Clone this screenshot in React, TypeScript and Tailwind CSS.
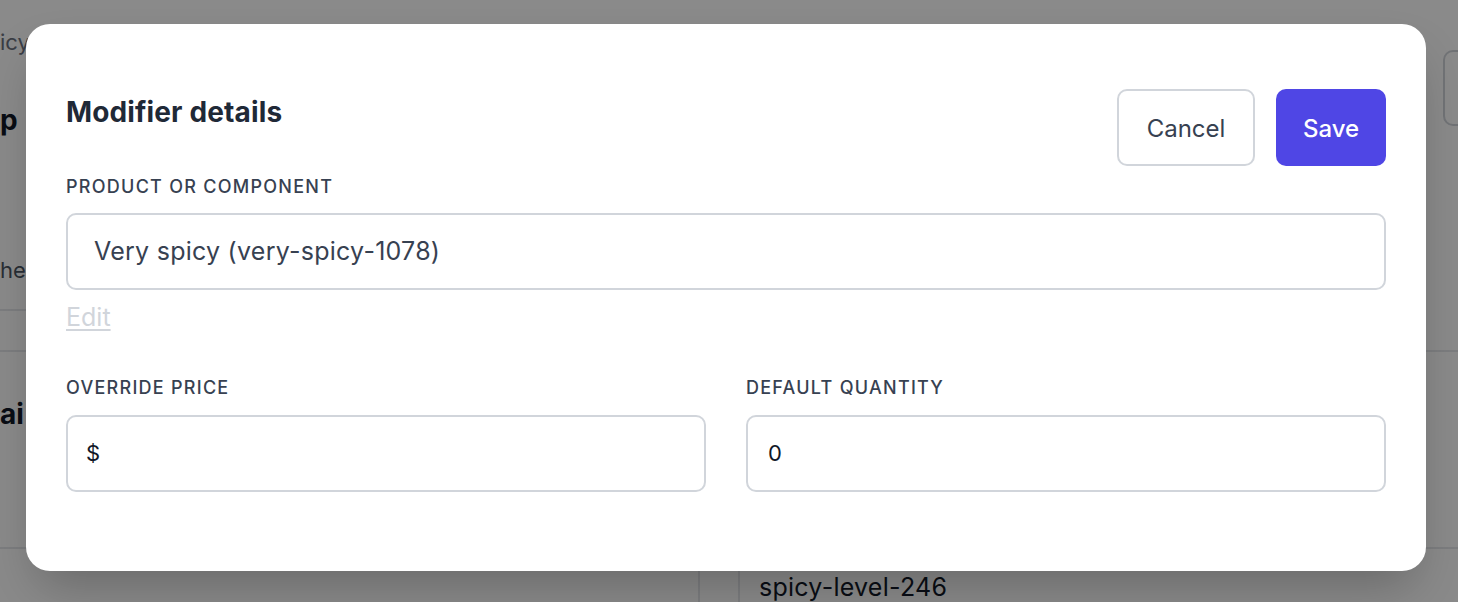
import React from "react";

const Field = ({ label, children }: { label: string; children: React.ReactNode }) => (
  <div className="flex flex-col">
    <label className="text-[18px] leading-[24px] font-medium tracking-[0.07em] text-[#374151] uppercase">
      {label}
    </label>
    {children}
  </div>
);

const BackgroundPage = () => (
  <div className="flex h-full flex-col text-[#111827]">
    {/* header area behind the modal */}
    <div className="flex h-[353px] border-b-2 border-[#e5e7eb]">
      <div className="flex w-[700px] flex-col">
        <div className="flex h-[311px] flex-col border-b-2 border-[#e5e7eb]">
          <p className="mt-[30px] text-[22px] leading-[24px] text-[#6b7280]">icy</p>
          <p className="mt-[48px] text-[28px] leading-[36px] font-bold">p</p>
          <p className="mt-[117px] text-[22px] leading-[30px] text-[#4b5563]">he</p>
        </div>
      </div>
      <div className="ml-auto flex w-[15px] flex-col pt-[50px]">
        <div className="h-[76px] w-[40px] rounded-[10px] border-2 border-[#d1d5db]" />
      </div>
    </div>
    {/* details section */}
    <div className="flex h-[197px] border-b-2 border-[#e5e7eb]">
      <p className="mt-[44px] text-[28px] leading-[36px] font-bold">ai</p>
    </div>
    {/* table row */}
    <div className="flex flex-1">
      <div className="w-[700px] border-r-2 border-[#e5e7eb]" />
      <div className="w-[40px] border-r-2 border-[#e5e7eb]" />
      <p className="pt-[23px] pl-[19px] text-[25px] leading-[30px] tracking-[0.01em] text-[#111827]">spicy-level-246</p>
    </div>
  </div>
);

export default function App() {
  return (
    <div className="relative h-[602px] w-[1458px] overflow-hidden bg-white font-['Inter',sans-serif]">
      <BackgroundPage />

      {/* overlay */}
      <div className="absolute inset-0 bg-black/[0.46]" />

      {/* modal */}
      <div className="absolute top-[24px] left-[26px] w-[1400px] rounded-[24px] bg-white px-[40px] pt-[65px] pb-[79px] shadow-2xl">
        <div className="flex items-start justify-between">
          <h2 className="mt-[7px] text-[28px] leading-[32px] font-bold tracking-[0.005em] text-[#1f2937]">
            Modifier details
          </h2>
          <div className="flex gap-[21px]">
            <button className="h-[77px] w-[138px] rounded-[10px] border-2 border-[#d1d5db] bg-white pt-[3px] text-[24px] text-[#374151]">
              Cancel
            </button>
            <button className="h-[77px] w-[110px] rounded-[10px] bg-[#4f46e5] pt-[3px] text-[24px] font-medium text-white">
              Save
            </button>
          </div>
        </div>

        <div className="mt-[9px]">
          <Field label="Product or component">
            <div className="mt-[14px] flex h-[77px] items-center rounded-[10px] border-2 border-[#d1d5db] px-[26px] text-[25px] tracking-[0.01em] text-[#374151]">
              Very spicy (very-spicy-1078)
            </div>
          </Field>
          <a className="mt-[12px] inline-block text-[25px] leading-[30px] text-[#d1d5db] underline underline-offset-[3px]">
            Edit
          </a>
        </div>

        <div className="mt-[44px] grid grid-cols-2 gap-[40px]">
          <Field label="Override price">
            <div className="mt-[15px] flex h-[77px] items-center rounded-[10px] border-2 border-[#d1d5db] px-[18px] text-[22px] text-[#111827]">
              $
            </div>
          </Field>
          <Field label="Default quantity">
            <div className="mt-[15px] flex h-[77px] items-center rounded-[10px] border-2 border-[#d1d5db] px-[20px] text-[22px] text-[#111827]">
              0
            </div>
          </Field>
        </div>
      </div>
    </div>
  );
}
